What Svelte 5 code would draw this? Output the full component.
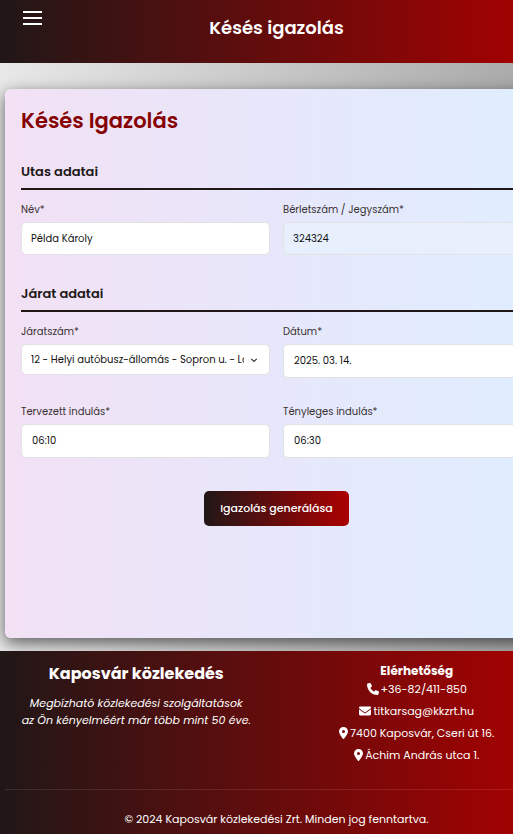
<script>
  let name = $state('Példa Károly');
  let pass = $state('324324');
  let line = $state('12');
  let date = $state('2025. 03. 14.');
  let planned = $state('06:10');
  let actual = $state('06:30');
</script>

{#snippet pin()}
  <svg class="icon pin" viewBox="0 0 384 512" aria-hidden="true"><path d="M215.7 499.2C267 435 384 279.4 384 192 384 86 298 0 192 0S0 86 0 192c0 87.400 117 243 168.300 307.200 12.300 15.300 35.100 15.300 47.400 0zM192 128a64 64 0 1 1 0 128 64 64 0 1 1 0-128z" /></svg>
{/snippet}

<div class="page">
  <header>
    <button class="menu" aria-label="Menü"><span></span><span></span><span></span></button>
    <div class="brand">Késés igazolás</div>
  </header>

  <main>
    <form class="card" onsubmit={(e) => e.preventDefault()}>
      <h1>Késés Igazolás</h1>

      <section>
        <h2>Utas adatai</h2>
        <div class="grid">
          <div class="field">
            <label for="name">Név*</label>
            <input id="name" type="text" bind:value={name} />
          </div>
          <div class="field">
            <label for="pass">Bérletszám / Jegyszám*</label>
            <input id="pass" class="filled" type="text" bind:value={pass} />
          </div>
        </div>
      </section>

      <section>
        <h2>Járat adatai</h2>
        <div class="grid">
          <div class="field">
            <label for="line">Járatszám*</label>
            <div class="select">
              <select id="line" bind:value={line}>
                <option value="12">12 - Helyi autóbusz-állomás - Sopron u. - Laktanya</option>
              </select>
              <svg viewBox="0 0 10 10" aria-hidden="true"><path d="M2.300 3.800 5 6.500 7.700 3.800" /></svg>
            </div>
          </div>
          <div class="field">
            <label for="date">Dátum*</label>
            <input id="date" class="tall" type="text" bind:value={date} />
          </div>
          <div class="field">
            <label for="planned">Tervezett indulás*</label>
            <input id="planned" class="tall" type="text" bind:value={planned} />
          </div>
          <div class="field">
            <label for="actual">Tényleges indulás*</label>
            <input id="actual" class="tall" type="text" bind:value={actual} />
          </div>
        </div>
      </section>

      <button class="submit" type="submit">Igazolás generálása</button>
    </form>
  </main>

  <footer>
    <div class="columns">
      <div class="about">
        <h3>Kaposvár közlekedés</h3>
        <p>Megbízható közlekedési szolgáltatások<br />az Ön kényelméért már több mint 50 éve.</p>
      </div>
      <div class="contact">
        <h4>Elérhetőség</h4>
        <ul>
          <li>
            <svg class="icon" viewBox="0 0 512 512" aria-hidden="true"><path d="M164.900 24.600c-7.700-18.600-28-28.500-47.400-23.200l-88 24C12.100 30.200 0 46 0 64c0 247.400 200.600 448 448 448 18 0 33.800-12.100 38.600-29.500l24-88c5.300-19.400-4.600-39.700-23.200-47.400l-96-40c-16.300-6.800-35.200-2.100-46.300 11.600L304.700 368C234.300 334.700 177.300 277.700 144 207.300l49.300-40.300c13.700-11.200 18.400-30 11.600-46.300l-40-96z" /></svg>
            +36-82/411-850
          </li>
          <li>
            <svg class="icon" viewBox="0 0 512 512" aria-hidden="true"><path d="M48 64C21.500 64 0 85.500 0 112c0 15.100 7.100 29.300 19.200 38.400l217.600 163.200c11.400 8.500 27 8.500 38.400 0l217.600-163.200c12.100-9.100 19.200-23.300 19.200-38.400 0-26.500-21.500-48-48-48H48zM0 176v208c0 35.300 28.700 64 64 64h384c35.300 0 64-28.700 64-64V176L294.400 339.200c-22.800 17.100-54 17.100-76.800 0L0 176z" /></svg>
            titkarsag@kkzrt.hu
          </li>
          <li>{@render pin()} 7400 Kaposvár, Cseri út 16.</li>
          <li>{@render pin()} Áchim András utca 1.</li>
        </ul>
      </div>
    </div>
    <p class="copyright">© 2024 Kaposvár közlekedési Zrt. Minden jog fenntartva.</p>
  </footer>
</div>

<style>
  :global(html) {
    overflow-x: hidden;
  }

  :global(body) {
    margin: 0;
    overflow-x: hidden;
  }

  .page {
    --dark: #211717;
    --bar: linear-gradient(90deg, #211717, #ab0000);
    box-sizing: border-box;
    min-width: 553px;
    min-height: 100vh;
    display: flex;
    flex-direction: column;
    font-family: Poppins, Inter, "Noto Sans", sans-serif;
    font-size: 11px;
    color: var(--dark);
    background: linear-gradient(90deg, #e8e8e8, #a6a6a6);
  }

  h1, h2, h3, h4, p, ul {
    margin: 0;
    padding: 0;
  }

  header {
    position: relative;
    padding: 13px 0 20px;
    background: var(--bar);
    color: #fff;
  }

  .brand {
    text-align: center;
    font-size: 18px;
    line-height: 30px;
    font-weight: 600;
  }

  .menu {
    position: absolute;
    left: 23px;
    top: 11px;
    width: 19px;
    padding: 0;
    border: 0;
    background: none;
    display: grid;
    gap: 4px;
  }

  .menu span {
    height: 2px;
    background: #fff;
  }

  main {
    flex: 1;
    padding: 26px 5px 13px;
    display: flex;
  }

  .card {
    flex: 1;
    padding: 16px 16px 112px;
    border-radius: 6px;
    background: linear-gradient(90deg, #f3e1f4, #e7e7fb 50%, #dfeeff);
    box-shadow: 0 5px 16px rgba(0, 0, 0, 0.6);
  }

  h1 {
    font-size: 21px;
    line-height: 32px;
    font-weight: 600;
    color: #850000;
  }

  section {
    margin-top: 24px;
  }

  section + section {
    margin-top: 28px;
  }

  h2 {
    padding-bottom: 5px;
    border-bottom: 2px solid var(--dark);
    font-size: 13px;
    line-height: 22px;
    font-weight: 600;
  }

  .grid {
    display: grid;
    grid-template-columns: 1fr 1fr;
    gap: 26px 13px;
    margin-top: 12px;
  }

  .field {
    display: flex;
    flex-direction: column;
    gap: 5px;
    min-width: 0;
  }

  label {
    font-size: 10px;
    line-height: 15px;
    color: #3a3333;
  }

  input, select {
    box-sizing: border-box;
    width: 100%;
    height: 33px;
    padding: 0 9px;
    border: 1px solid #e2e2e2;
    border-radius: 5px;
    background: #fff;
    color: #111;
    font: inherit;
    font-size: 10px;
  }

  .filled {
    background: #e8f0fe;
  }

  .tall {
    height: 34px;
    padding: 0 10px;
  }

  .select {
    display: grid;
    align-items: center;
  }

  .select > * {
    grid-area: 1 / 1;
  }

  select {
    appearance: none;
    height: 31px;
    padding-right: 25px;
  }

  .select svg {
    width: 10px;
    height: 10px;
    margin-right: 11px;
    justify-self: end;
    pointer-events: none;
    fill: none;
    stroke: #333;
    stroke-width: 1.2;
  }

  .submit {
    display: block;
    margin: 33px auto 0;
    padding: 0 16px;
    height: 35px;
    border: 0;
    border-radius: 5px;
    background: var(--bar);
    color: #fff;
    font: inherit;
    font-weight: 500;
  }

  footer {
    padding: 11px 5px 6px;
    background: var(--bar);
    color: #fff;
  }

  .columns {
    display: grid;
    grid-template-columns: 1fr 1fr;
    gap: 18px;
    text-align: center;
    padding-bottom: 25px;
    border-bottom: 1px solid rgba(255, 255, 255, 0.1);
  }

  h3 {
    font-size: 16px;
    line-height: 24px;
    font-weight: 700;
  }

  .about p {
    margin-top: 9px;
    line-height: 17px;
    font-style: italic;
  }

  h4 {
    font-size: 12px;
    line-height: 18px;
    font-weight: 700;
  }

  ul {
    list-style: none;
    display: grid;
    gap: 4px;
  }

  li {
    display: flex;
    justify-content: center;
    align-items: center;
    gap: 2px;
    line-height: 18px;
  }

  .icon {
    width: 12px;
    height: 12px;
    fill: #fff;
  }

  .pin {
    width: 9px;
  }

  .copyright {
    padding-top: 20px;
    text-align: center;
    line-height: 18px;
  }
</style>
